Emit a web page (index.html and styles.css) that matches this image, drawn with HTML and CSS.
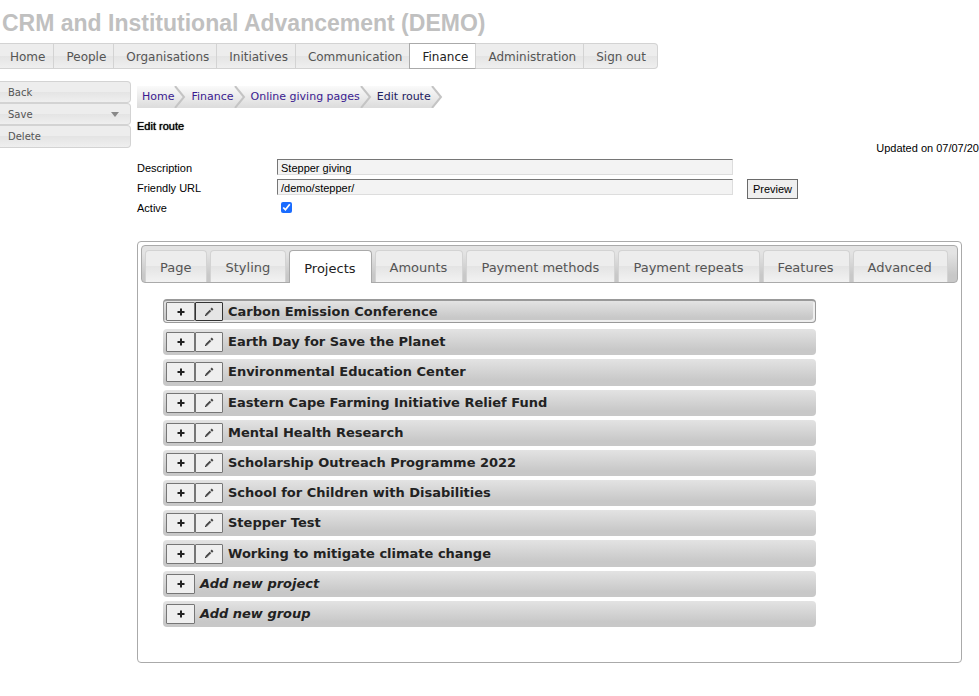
FILE: index.html
```html
<!DOCTYPE html>
<html lang="en">
<head>
<meta charset="utf-8">
<title>Edit route</title>
<link rel="stylesheet" href="styles.css">
</head>
<body>
<svg class="sprite" aria-hidden="true">
  <symbol id="plus" viewBox="0 0 8 8"><path d="M4 0.5V7.5M0.5 4H7.5" stroke="#222" stroke-width="2" fill="none"/></symbol>
  <symbol id="pencil" viewBox="0 0 10 10"><path d="M2 8L6.5 3.5" stroke="#444" stroke-width="2.2" fill="none"/><path d="M7.2 2.8L8.6 1.4" stroke="#444" stroke-width="2.4" fill="none"/><path d="M1 9V7.5L2.5 9Z" fill="#222"/><path d="M3 8L6.5 4.5" stroke="#999" stroke-width="0.6"/></symbol>
</svg>
<header>
  <h1 class="site-title">CRM and Institutional Advancement (DEMO)</h1>
  <nav class="main-nav">
    <a href="#">Home</a><a href="#">People</a><a href="#">Organisations</a><a href="#">Initiatives</a><a href="#">Communication</a><a href="#" class="active">Finance</a><a href="#">Administration</a><a href="#">Sign out</a>
  </nav>
</header>
<div class="layout">
  <aside class="side-menu">
    <button type="button">Back</button>
    <button type="button">Save<span class="caret"></span></button>
    <button type="button">Delete</button>
  </aside>
  <main>
    <nav class="crumbs">
      <a href="#">Home</a><svg viewBox="0 0 12 22"><path d="M1 0L10 11L1 22" class="edge"/></svg>
      <a href="#">Finance</a><svg viewBox="0 0 12 22"><path d="M1 0L10 11L1 22" class="edge"/></svg>
      <a href="#">Online giving pages</a><svg viewBox="0 0 12 22"><path d="M1 0L10 11L1 22" class="edge"/></svg>
      <a href="#" class="current">Edit route</a><svg viewBox="0 0 12 22"><path d="M1 0H12V22H1L10 11Z" fill="#fff"/><path d="M1 0L10 11L1 22" class="edge"/></svg>
    </nav>
    <h2 class="page-title">Edit route</h2>
    <p class="updated">Updated on 07/07/20</p>
    <form class="details">
      <label for="description">Description</label>
      <input type="text" id="description" value="Stepper giving">
      <label for="url">Friendly URL</label>
      <input type="text" id="url" value="/demo/stepper/">
      <button type="button" class="preview">Preview</button>
      <label for="active">Active</label>
      <input type="checkbox" id="active" checked>
    </form>
    <section class="panel">
      <div class="tabs" role="tablist">
        <button type="button" role="tab">Page</button>
        <button type="button" role="tab">Styling</button>
        <button type="button" role="tab" class="selected" aria-selected="true">Projects</button>
        <button type="button" role="tab">Amounts</button>
        <button type="button" role="tab">Payment methods</button>
        <button type="button" role="tab">Payment repeats</button>
        <button type="button" role="tab">Features</button>
        <button type="button" role="tab">Advanced</button>
      </div>
      <ul class="projects">
        <li class="focused"><button type="button" aria-label="Expand"><svg><use href="#plus"/></svg></button><button type="button" class="edit" aria-label="Edit"><svg><use href="#pencil"/></svg></button><span>Carbon Emission Conference</span></li>
        <li><button type="button" aria-label="Expand"><svg><use href="#plus"/></svg></button><button type="button" class="edit" aria-label="Edit"><svg><use href="#pencil"/></svg></button><span>Earth Day for Save the Planet</span></li>
        <li><button type="button" aria-label="Expand"><svg><use href="#plus"/></svg></button><button type="button" class="edit" aria-label="Edit"><svg><use href="#pencil"/></svg></button><span>Environmental Education Center</span></li>
        <li><button type="button" aria-label="Expand"><svg><use href="#plus"/></svg></button><button type="button" class="edit" aria-label="Edit"><svg><use href="#pencil"/></svg></button><span>Eastern Cape Farming Initiative Relief Fund</span></li>
        <li><button type="button" aria-label="Expand"><svg><use href="#plus"/></svg></button><button type="button" class="edit" aria-label="Edit"><svg><use href="#pencil"/></svg></button><span>Mental Health Research</span></li>
        <li><button type="button" aria-label="Expand"><svg><use href="#plus"/></svg></button><button type="button" class="edit" aria-label="Edit"><svg><use href="#pencil"/></svg></button><span>Scholarship Outreach Programme 2022</span></li>
        <li><button type="button" aria-label="Expand"><svg><use href="#plus"/></svg></button><button type="button" class="edit" aria-label="Edit"><svg><use href="#pencil"/></svg></button><span>School for Children with Disabilities</span></li>
        <li><button type="button" aria-label="Expand"><svg><use href="#plus"/></svg></button><button type="button" class="edit" aria-label="Edit"><svg><use href="#pencil"/></svg></button><span>Stepper Test</span></li>
        <li><button type="button" aria-label="Expand"><svg><use href="#plus"/></svg></button><button type="button" class="edit" aria-label="Edit"><svg><use href="#pencil"/></svg></button><span>Working to mitigate climate change</span></li>
        <li class="add"><button type="button" aria-label="Add"><svg><use href="#plus"/></svg></button><span>Add new project</span></li>
        <li class="add"><button type="button" aria-label="Add"><svg><use href="#plus"/></svg></button><span>Add new group</span></li>
      </ul>
    </section>
  </main>
</div>
</body>
</html>
```
FILE: styles.css
```css
* { box-sizing: border-box; }

body {
  margin: 0;
  background: #fff;
  color: #000;
  font: 11px/14px Arial, "Liberation Sans", sans-serif;
}

a { text-decoration: none; }
button { margin: 0; padding: 0; cursor: pointer; }
.sprite { display: none; }

.site-title {
  margin: 0;
  padding: 8px 0 5px 2px;
  font-size: 23px;
  line-height: 30px;
  color: #c0c0c0;
}

.main-nav {
  display: flex;
  width: fit-content;
  height: 26px;
  border: 1px solid #d3d3d3;
  border-left: 0;
  border-radius: 0 4px 4px 0;
  background: linear-gradient(#ededed 50%, #e4e4e4 50%, #efefef);
  font: 12px/26px Verdana, "DejaVu Sans", sans-serif;
}
.main-nav a {
  padding: 0 7px 0 12px;
  color: #555;
  border-right: 1px solid #d3d3d3;
}
.main-nav a:first-child { padding: 0 8px 0 10px; }
.main-nav a:last-child { padding-right: 11px; border-right: 0; }
.main-nav .active {
  margin: -1px 0 -1px -1px;
  border: 1px solid #aaa;
  border-right-color: #d3d3d3;
  background: #fff;
  color: #212121;
}

.layout { display: flex; gap: 6px; padding-top: 12px; }

.side-menu { flex: none; width: 131px; }
.side-menu button {
  display: flex;
  align-items: center;
  justify-content: space-between;
  width: 100%;
  height: 22px;
  padding: 1px 11px 0 8px;
  border: 1px solid #d3d3d3;
  border-left: 0;
  border-radius: 0 4px 4px 0;
  background: linear-gradient(#ededed 50%, #e4e4e4 50%, #efefef);
  color: #555;
  font: 10px/20px Verdana, "DejaVu Sans", sans-serif;
}
.side-menu button:last-child { height: 23px; }
.caret {
  border: 4px solid transparent;
  border-top: 5px solid #888;
  border-bottom: 0;
}

main { flex: 1; min-width: 0; padding-top: 5px; }

.crumbs {
  display: flex;
  width: fit-content;
  height: 22px;
  background: linear-gradient(#fafafa, #dcdcdc);
  font: 11px/22px Verdana, "DejaVu Sans", sans-serif;
}
.crumbs a { padding-left: 5px; color: #3a1a90; }
.crumbs .current { color: #1d2160; }
.crumbs svg { width: 12px; height: 22px; }
.crumbs .edge { fill: none; stroke: #c4c4c4; stroke-width: 2; }

.page-title {
  margin: 0;
  padding-top: 11px;
  font-size: 11px;
  line-height: 14px;
  font-weight: 400;
  text-shadow: 0 0 1px #000;
}

.updated { margin: 8px 0 0; text-align: right; white-space: nowrap; }

.details {
  display: grid;
  grid-template-columns: 140px 456px auto;
  grid-auto-rows: 16px;
  row-gap: 4px;
  justify-content: start;
  align-items: center;
  margin-top: 4px;
}
.details label { grid-column: 1; line-height: 16px; padding-top: 2px; }
.details input[type="text"] {
  width: 100%;
  height: 16px;
  padding: 1px 3px 0;
  border: 1px solid #ddd;
  border-top-color: #767676;
  border-left-color: #767676;
  background: #f3f3f3;
  font: 11px/13px Arial, "Liberation Sans", sans-serif;
}
.details input[type="checkbox"] {
  width: 11px;
  height: 11px;
  margin: 0 0 0 4px;
  accent-color: #1a6cff;
}
.preview {
  align-self: start;
  width: 51px;
  height: 20px;
  margin-left: 14px;
  border: 1px solid #6a6a6a;
  background: #efefef;
  font: 11px/16px Arial, "Liberation Sans", sans-serif;
}

.panel {
  margin: 26px 17px 0 0;
  padding: 3px 3px 35px;
  border: 1px solid #aaa;
  border-radius: 4px;
}
.tabs {
  display: flex;
  gap: 3px;
  height: 38px;
  padding: 4px 3px 0;
  border: 1px solid #aaa;
  border-radius: 4px;
  background: linear-gradient(#e3e3e3 20%, #c8c8c8 80%);
}
.tabs button {
  height: 32px;
  padding: 2px 15px 0 14px;
  border: 1px solid #d3d3d3;
  border-bottom: 0;
  border-radius: 4px 4px 0 0;
  background: linear-gradient(#ededed 50%, #e4e4e4 50%, #f2f2f2);
  color: #555;
  font: 13px/29px Verdana, "DejaVu Sans", sans-serif;
  white-space: nowrap;
}
.tabs .selected {
  height: 33px;
  border-color: #aaa;
  background: #fff;
  color: #212121;
}

.projects {
  display: grid;
  grid-auto-rows: 1fr;
  gap: 4px;
  max-width: 653px;
  min-height: 328px;
  margin: 16px 0 0 22px;
  padding: 0;
  list-style: none;
  font: bold 13px/20px Verdana, "DejaVu Sans", sans-serif;
  color: #222;
}
.projects li {
  display: flex;
  align-items: center;
  padding: 0 3px;
  border-radius: 4px;
  background: linear-gradient(#e3e3e3, #c8c8c8 80%);
}
.projects .focused {
  margin-bottom: 2px;
  border: 1px solid #999;
  border-top-width: 2px;
  padding: 0 2px;
  box-shadow: inset -2px -2px #eee;
}
.projects button {
  display: grid;
  place-items: center;
  width: 29px;
  height: 20px;
  border: 1px solid #767676;
  border-radius: 1px;
  background: #efefef;
}
.projects .focused button { height: 19px; }
.projects .edit { width: 28px; }
.projects .focused .edit { border-color: #333; background: #e5e5e5; }
.projects button svg { width: 8px; height: 8px; }
.projects .edit svg { width: 10px; height: 10px; }
.projects span { padding-left: 5px; }
.projects .add { font-style: italic; }
```
